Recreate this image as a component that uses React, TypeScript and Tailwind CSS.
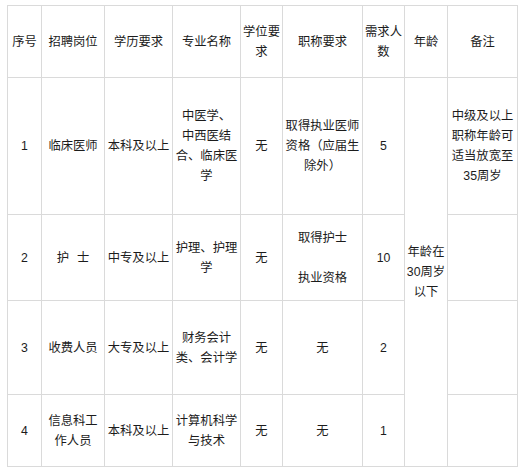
import React from "react";

const Cell = ({ children, className = "" }: { children?: React.ReactNode; className?: string }) => (
  <div className={`bg-white flex items-center justify-center text-center ${className}`}>
    <div>{children}</div>
  </div>
);

const L = ({ lines }: { lines: string[] }) => (
  <>
    {lines.map((l, i) => (
      <div key={i} className="whitespace-nowrap">
        {l}
      </div>
    ))}
  </>
);

export default function App() {
  return (
    <div className="w-[523px] h-[473px] bg-white pt-[5px] pl-[7px]">
      <div
        className="grid w-fit gap-px p-px bg-[#dadada] text-[12.3px] leading-[20px] text-[#1c1c1c]"
        style={{ fontFamily: '"Liberation Sans", "Noto Sans CJK SC", sans-serif' }}
      >
        <div className="grid grid-cols-[33px_62px_67px_67px_41px_79px_41px_42px_69px] grid-rows-[71px_136px_85px_93px_71px] gap-px">
          {/* header */}
          <Cell>序号</Cell>
          <Cell>招聘岗位</Cell>
          <Cell>学历要求</Cell>
          <Cell>专业名称</Cell>
          <Cell>
            <L lines={["学位要", "求"]} />
          </Cell>
          <Cell>职称要求</Cell>
          <Cell>
            <L lines={["需求人", "数"]} />
          </Cell>
          <Cell>年龄</Cell>
          <Cell>备注</Cell>

          {/* row 1 */}
          <Cell>1</Cell>
          <Cell>临床医师</Cell>
          <Cell>本科及以上</Cell>
          <Cell>
            <L lines={["中医学、", "中西医结", "合、临床医", "学"]} />
          </Cell>
          <Cell>无</Cell>
          <Cell>
            <L lines={["取得执业医师", "资格（应届生", "除外）"]} />
          </Cell>
          <Cell>5</Cell>
          <Cell className="row-span-4">
            <L lines={["年龄在", "30周岁", "以下"]} />
          </Cell>
          <Cell>
            <L lines={["中级及以上", "职称年龄可", "适当放宽至", "35周岁"]} />
          </Cell>

          {/* row 2 */}
          <Cell>2</Cell>
          <Cell>
            <span>护</span>
            <span className="ml-[8px]">士</span>
          </Cell>
          <Cell>中专及以上</Cell>
          <Cell>
            <L lines={["护理、护理", "学"]} />
          </Cell>
          <Cell>无</Cell>
          <Cell>
            <div>取得护士</div>
            <div>&nbsp;</div>
            <div>执业资格</div>
          </Cell>
          <Cell>10</Cell>
          <Cell />

          {/* row 3 */}
          <Cell>3</Cell>
          <Cell>收费人员</Cell>
          <Cell>大专及以上</Cell>
          <Cell>
            <L lines={["财务会计", "类、会计学"]} />
          </Cell>
          <Cell>无</Cell>
          <Cell>无</Cell>
          <Cell>2</Cell>
          <Cell />

          {/* row 4 */}
          <Cell>4</Cell>
          <Cell>
            <L lines={["信息科工", "作人员"]} />
          </Cell>
          <Cell>本科及以上</Cell>
          <Cell>
            <L lines={["计算机科学", "与技术"]} />
          </Cell>
          <Cell>无</Cell>
          <Cell>无</Cell>
          <Cell>1</Cell>
          <Cell />
        </div>
      </div>
    </div>
  );
}
